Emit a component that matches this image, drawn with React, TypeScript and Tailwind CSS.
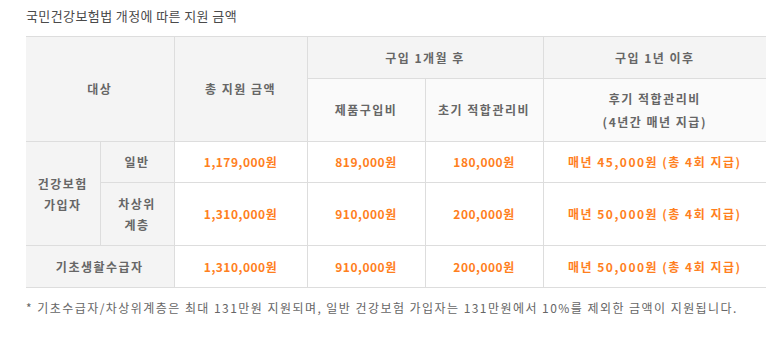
const font = { fontFamily: '"Noto Sans CJK KR", "Noto Sans", sans-serif' };

const th = "border border-[#dddddd] font-bold text-[12px] text-[#666666] tracking-[1.5px] text-center align-middle";
const td = "border border-[#dddddd] font-bold text-[12px] text-[#ff7f1e] tracking-[0.5px] text-center align-middle bg-white";

export default function App() {
  return (
    <div className="w-[774px] h-[340px] bg-white pl-[26px] pr-[8px]" style={font}>
      <h2 className="pt-[6px] h-[36px] text-[13px] leading-[20px] text-[#4a4a4a] tracking-[0.4px]">
        국민건강보험법 개정에 따른 지원 금액
      </h2>
      <table className="w-[740px] border-collapse table-fixed [&_td:first-child]:border-l-0 [&_th:first-child]:border-l-0 [&_td:last-child]:border-r-0 [&_th:last-child]:border-r-0">
        <colgroup>
          <col className="w-[74px]" />
          <col className="w-[74px]" />
          <col className="w-[133px]" />
          <col className="w-[118px]" />
          <col className="w-[118px]" />
          <col className="w-[223px]" />
        </colgroup>
        <thead>
          <tr className="h-[42px] bg-[#f4f4f4]">
            <th rowSpan={2} colSpan={2} className={th}>대상</th>
            <th rowSpan={2} className={th}>총 지원 금액</th>
            <th colSpan={2} className={th}>구입 1개월 후</th>
            <th className={th}>구입 1년 이후</th>
          </tr>
          <tr className="h-[63px] bg-[#fafafa]">
            <th className={th}>제품구입비</th>
            <th className={th}>초기 적합관리비</th>
            <th className={`${th} leading-[23px]`}>
              후기 적합관리비
              <br />
              (4년간 매년 지급)
            </th>
          </tr>
        </thead>
        <tbody>
          <tr className="h-[41px]">
            <th rowSpan={2} className={`${th} bg-[#f4f4f4] leading-[21px]`}>
              건강보험
              <br />
              가입자
            </th>
            <th className={`${th} bg-[#f4f4f4]`}>일반</th>
            <td className={td}>1,179,000원</td>
            <td className={td}>819,000원</td>
            <td className={td}>180,000원</td>
            <td className={`${td} tracking-[1.5px]`}>매년 45,000원 (총 4회 지급)</td>
          </tr>
          <tr className="h-[63px]">
            <th className={`${th} bg-[#f4f4f4] leading-[21px]`}>
              차상위
              <br />
              계층
            </th>
            <td className={td}>1,310,000원</td>
            <td className={td}>910,000원</td>
            <td className={td}>200,000원</td>
            <td className={`${td} tracking-[1.5px]`}>매년 50,000원 (총 4회 지급)</td>
          </tr>
          <tr className="h-[42px]">
            <th colSpan={2} className={`${th} bg-[#f4f4f4]`}>기초생활수급자</th>
            <td className={td}>1,310,000원</td>
            <td className={td}>910,000원</td>
            <td className={td}>200,000원</td>
            <td className={`${td} tracking-[1.5px]`}>매년 50,000원 (총 4회 지급)</td>
          </tr>
        </tbody>
      </table>
      <p className="mt-[11px] text-[12px] leading-[18px] text-[#666666] tracking-[1.45px] whitespace-nowrap">
        * 기초수급자/차상위계층은 최대 131만원 지원되며, 일반 건강보험 가입자는 131만원에서 10%를 제외한 금액이 지원됩니다.
      </p>
    </div>
  );
}
